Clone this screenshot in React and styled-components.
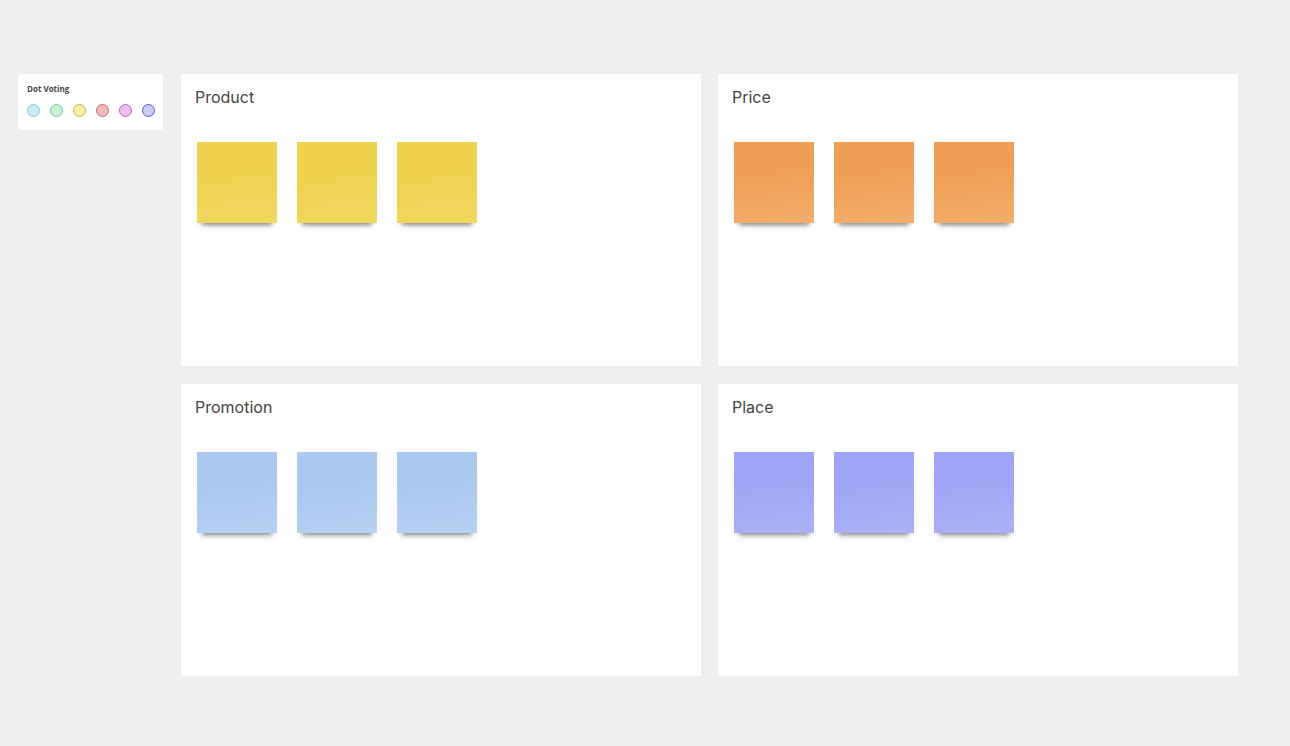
import React from 'react'
import styled, { createGlobalStyle } from 'styled-components'

const GlobalStyle = createGlobalStyle`
  html, body {
    margin: 0;
    padding: 0;
    background: #efefef;
  }
  body {
    font-family: "Open Sans", "Liberation Sans", sans-serif;
  }
`

const dots = [
  { fill: '#c9edf9', line: '#7fc3dd' },
  { fill: '#c9f1d5', line: '#6fc78b' },
  { fill: '#f8ef9f', line: '#c8ae4c' },
  { fill: '#f1baba', line: '#bf6a6a' },
  { fill: '#f1bbf5', line: '#b664c8' },
  { fill: '#cacbf8', line: '#5c5cc9' },
]

const sections = [
  { title: 'Product', top: '#eed24f', bottom: '#f0d860' },
  { title: 'Price', top: '#ef9f55', bottom: '#f2ae6c' },
  { title: 'Promotion', top: '#abc8ef', bottom: '#b6d1f3' },
  { title: 'Place', top: '#9fa6f5', bottom: '#abb1f7' },
]

function App() {
  return (
    <>
      <GlobalStyle />
      <Board>
        <VotingCard>
          <VotingTitle>Dot Voting</VotingTitle>
          <DotRow>
            {dots.map((d, i) => (
              <Dot key={i} fill={d.fill} line={d.line} />
            ))}
          </DotRow>
        </VotingCard>
        <Grid>
          {sections.map((s) => (
            <Panel key={s.title}>
              <PanelTitle>{s.title}</PanelTitle>
              <StickyRow>
                {[0, 1, 2].map((i) => (
                  <Sticky key={i} top={s.top} bottom={s.bottom} />
                ))}
              </StickyRow>
            </Panel>
          ))}
        </Grid>
      </Board>
    </>
  )
}

export default App

const Board = styled.div`
  width: 1290px;
  height: 746px;
  box-sizing: border-box;
  padding: 74px 0 0 18px;
  display: flex;
  align-items: flex-start;
  gap: 18px;
  background: #efefef;
`

const VotingCard = styled.div`
  width: 145px;
  height: 56px;
  box-sizing: border-box;
  padding: 9px 0 0 9px;
  background: #fff;
  border-radius: 2px;
  box-shadow: 0 0 1px rgba(0, 0, 0, 0.12);
`

const VotingTitle = styled.div`
  font-size: 8px;
  font-weight: 700;
  color: #444;
  line-height: 11px;
`

const DotRow = styled.div`
  display: flex;
  gap: 10px;
  margin-top: 10px;
`

const Dot = styled.span`
  width: 13px;
  height: 13px;
  box-sizing: border-box;
  border-radius: 50%;
  background: ${(p) => p.fill};
  border: 1.5px solid ${(p) => p.line};
`

const Grid = styled.div`
  display: grid;
  grid-template-columns: 520px 520px;
  grid-auto-rows: 292px;
  column-gap: 17px;
  row-gap: 18px;
`

const Panel = styled.div`
  background: #fff;
  box-sizing: border-box;
  padding: 13px 0 0 14px;
`

const PanelTitle = styled.div`
  font-family: "Inter", "Liberation Sans", sans-serif;
  font-size: 16px;
  color: #444;
  line-height: 20px;
`

const StickyRow = styled.div`
  display: flex;
  gap: 20px;
  margin-top: 35px;
  padding-left: 2px;
`

const Sticky = styled.div`
  width: 80px;
  height: 81px;
  background: linear-gradient(172deg, ${(p) => p.top} 0%, ${(p) => p.top} 40%, ${(p) => p.bottom} 100%);
  box-shadow: 0 7px 5px -5px rgba(0, 0, 0, 0.5);
`
